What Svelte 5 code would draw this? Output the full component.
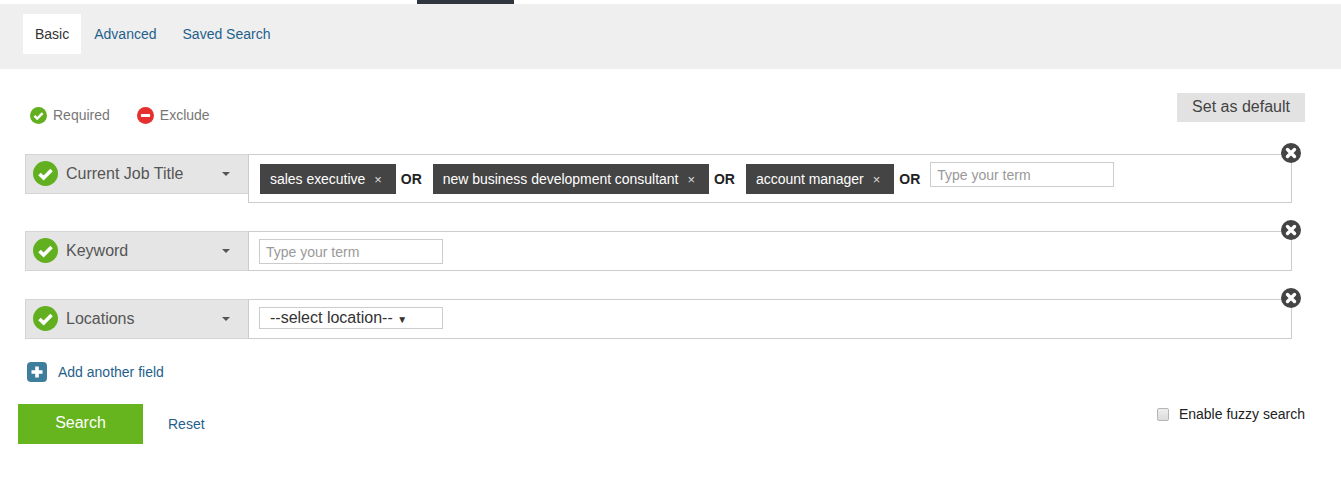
<script>
	const tabs = ['Basic', 'Advanced', 'Saved Search']
	const terms = ['sales executive', 'new business development consultant', 'account manager']
</script>

{#snippet check(size)}
	<svg class="ico" width={size} height={size} viewBox="0 0 24 24">
		<circle cx="12" cy="12" r="12" fill="#62b01f" />
		<path d="M6.2 12.4l4 4 7.6-7.8" fill="none" stroke="#fff" stroke-width="3.4" />
	</svg>
{/snippet}

{#snippet remove()}
	<button class="remove" aria-label="Remove field">
		<svg width="20" height="20" viewBox="0 0 20 20">
			<circle cx="10" cy="10" r="10" fill="#444" />
			<path d="M6.5 6.5l7 7M13.5 6.5l-7 7" stroke="#fff" stroke-width="3.4" stroke-linecap="round" />
		</svg>
	</button>
{/snippet}

{#snippet label(text)}
	<div class="label">
		{@render check(25)}
		<span class="label-text">{text}</span>
		<span class="caret"></span>
	</div>
{/snippet}

<main>
	<div class="top-strip"><span class="active-mark"></span></div>
	<nav class="tabs">
		{#each tabs as tab, i}
			<a href="#top" class="tab" class:selected={i === 0}>{tab}</a>
		{/each}
	</nav>

	<div class="legend-row">
		<div class="legend">
			<span class="legend-item">{@render check(17)} Required</span>
			<span class="legend-item">
				<svg class="ico" width="17" height="17" viewBox="0 0 24 24">
					<circle cx="12" cy="12" r="12" fill="#e5302f" />
					<rect x="5.5" y="9.8" width="13" height="4.4" rx="1" fill="#fff" />
				</svg>
				Exclude
			</span>
		</div>
		<button class="default-btn">Set as default</button>
	</div>

	<div class="field">
		{@render label('Current Job Title')}
		<div class="value terms">
			{#each terms as term}
				<span class="chip">{term}<span class="chip-x">×</span></span>
				<b class="or">OR</b>
			{/each}
			<input class="term-input" placeholder="Type your term" />
		</div>
		{@render remove()}
	</div>

	<div class="field">
		{@render label('Keyword')}
		<div class="value">
			<input class="term-input" placeholder="Type your term" />
		</div>
		{@render remove()}
	</div>

	<div class="field">
		{@render label('Locations')}
		<div class="value">
			<div class="select">--select location-- <span class="select-arrow">▼</span></div>
		</div>
		{@render remove()}
	</div>

	<a href="#top" class="add-field">
		<svg width="20" height="20" viewBox="0 0 20 20">
			<rect width="20" height="20" rx="4" fill="#3f7d9c" />
			<path d="M10 4.5v11M4.5 10h11" stroke="#fff" stroke-width="3.6" />
		</svg>
		Add another field
	</a>

	<div class="actions">
		<button class="search">Search</button>
		<a href="#top" class="reset">Reset</a>
		<label class="fuzzy"><input type="checkbox" />Enable fuzzy search</label>
	</div>
</main>

<style>
	:global(body) {
		background: #fff;
	}

	main {
		font-family: "Liberation Sans", Arial, sans-serif;
		font-size: 14px;
		height: 492px;
		overflow: hidden;
		color: #222;
	}

	a {
		text-decoration: none;
		color: #1f5f8b;
	}

	.top-strip {
		height: 4px;
		padding-left: 417px;
	}

	.active-mark {
		display: block;
		width: 97px;
		height: 4px;
		background: #2f3640;
	}

	.tabs {
		display: flex;
		height: 65px;
		box-sizing: border-box;
		padding: 10px 0 0 23px;
		background: #efefef;
	}

	.tab {
		height: 40px;
		line-height: 40px;
		padding: 0 13px 0 12px;
		margin-right: 1px;
	}

	.tab.selected {
		padding-right: 12px;
		background: #fff;
		color: #333;
	}

	.legend-row {
		display: flex;
		justify-content: space-between;
		align-items: flex-start;
		height: 85px;
		padding: 24px 36px 0 30px;
		box-sizing: border-box;
	}

	.legend {
		display: flex;
		gap: 27px;
		padding-top: 14px;
		color: #777;
		line-height: 17px;
	}

	.legend-item {
		display: flex;
		align-items: center;
		gap: 6px;
	}

	.ico {
		flex: none;
		display: block;
	}

	.default-btn {
		width: 128px;
		height: 29px;
		border: none;
		padding: 0 0 2px;
		background: #e2e2e2;
		color: #444;
		font: 16px "Liberation Sans", Arial, sans-serif;
	}

	.field {
		position: relative;
		display: flex;
		align-items: flex-start;
		width: 1267px;
		margin: 0 0 28px 25px;
	}

	.label {
		display: flex;
		align-items: center;
		box-sizing: border-box;
		width: 223px;
		height: 40px;
		flex: none;
		padding: 0 18px 0 7px;
		background: #e5e5e5;
		border: 1px solid #d4d4d4;
		border-right: none;
		color: #555;
		font-size: 16px;
	}

	.label .ico {
		margin-top: -1px;
	}

	.label-text {
		flex: 1;
		margin-left: 8px;
	}

	.caret {
		width: 0;
		height: 0;
		border: 4px solid transparent;
		border-top: 4px solid #555;
		border-bottom: none;
	}

	.value {
		flex: 1;
		box-sizing: border-box;
		height: 40px;
		padding: 7px 10px;
		border: 1px solid #ccc;
	}

	.value.terms {
		display: flex;
		align-items: flex-start;
		height: 49px;
		padding-left: 11px;
	}

	.chip {
		display: flex;
		align-items: center;
		height: 30px;
		margin-top: 2px;
		padding: 0 14px 0 10px;
		background: #444;
		color: #fff;
		white-space: nowrap;
		letter-spacing: -0.03px;
	}

	.chip-x {
		margin-left: 9px;
		font-size: 13px;
		color: #ddd;
	}

	.or {
		margin: 2px 11px 0 5px;
		line-height: 30px;
		color: #222;
	}

	.or:nth-last-of-type(1) {
		margin-right: 10px;
	}

	.term-input {
		display: block;
		box-sizing: border-box;
		width: 184px;
		height: 25px;
		padding: 1px 6px 0;
		border: 1px solid #ccc;
		background: #fff;
		font: 14px "Liberation Sans", Arial, sans-serif;
		outline: none;
	}

	.term-input::placeholder {
		color: #999;
		opacity: 1;
	}

	.select {
		box-sizing: border-box;
		width: 184px;
		height: 22px;
		line-height: 20px;
		padding-left: 10px;
		border: 1px solid #ccc;
		font-size: 16px;
		color: #333;
		white-space: nowrap;
	}

	.select-arrow {
		font-size: 10px;
	}

	.remove {
		position: absolute;
		top: -11px;
		right: -9px;
		width: 20px;
		height: 20px;
		padding: 0;
		border: none;
		background: none;
	}

	.remove svg {
		display: block;
	}

	.add-field {
		display: flex;
		align-items: center;
		gap: 11px;
		margin: -5px 0 0 27px;
		height: 20px;
		width: max-content;
	}

	.actions {
		display: flex;
		align-items: flex-start;
		margin-top: 22px;
		padding: 0 36px 0 18px;
	}

	.search {
		width: 125px;
		height: 40px;
		padding: 0 0 3px;
		border: none;
		background: #66b51e;
		color: #fff;
		font: 16px "Liberation Sans", Arial, sans-serif;
	}

	.reset {
		margin: 12px 0 0 25px;
		line-height: 16px;
	}

	.fuzzy {
		display: flex;
		align-items: center;
		gap: 10px;
		margin: 2px 0 0 auto;
		line-height: 16px;
	}

	.fuzzy input {
		appearance: none;
		box-sizing: border-box;
		width: 12px;
		height: 13px;
		margin: 1px 0 0;
		border: 1px solid #b5b5b5;
		border-radius: 2px;
		background: linear-gradient(#eee, #dcdcdc);
	}
</style>
